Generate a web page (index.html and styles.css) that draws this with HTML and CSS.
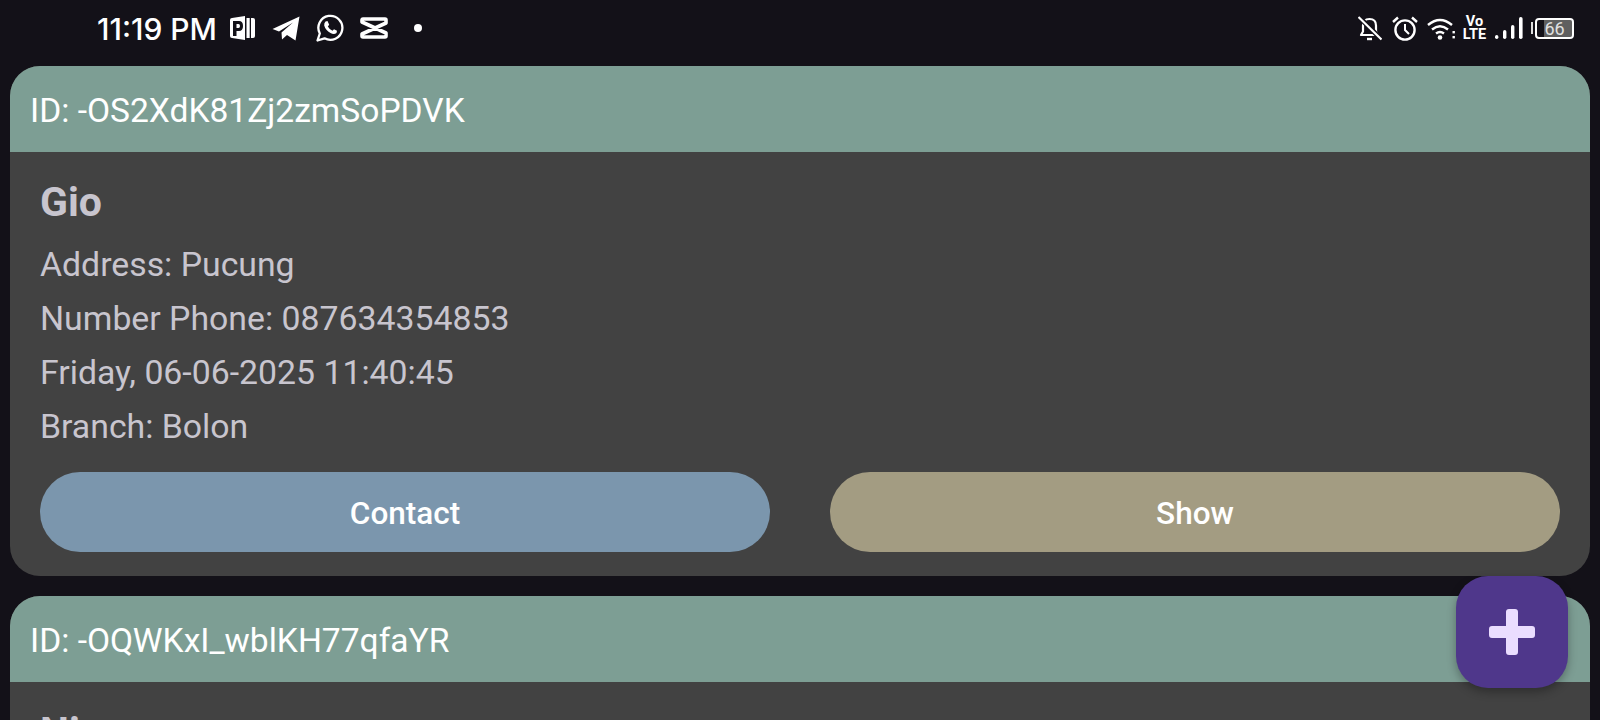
FILE: index.html
```html
<!DOCTYPE html>
<html lang="en">
<head>
    <meta charset="UTF-8">
    <meta name="viewport" content="width=device-width, initial-scale=1.0">
    <title>Customers</title>
    <link rel="stylesheet" href="styles.css">
</head>
<body>
    <!-- Status bar -->
    <div class="status-bar">
        <div class="status-left">
            <span class="clock">11:19 PM</span>
            <svg class="ic-p" width="25" height="26" viewBox="0 0 25 26">
                <path d="M2 3 L15 1 V25 L2 23 Q0 23 0 21 V5 Q0 3 2 3 Z" fill="#fff"/>
                <path d="M3 6 H9 Q13 6 13 11 Q13 16 9 16 H6.5 V21 H3 Z" fill="#131118"/>
                <path d="M6.5 9 H8.5 Q10 9 10 11 Q10 13 8.5 13 H6.5 Z" fill="#fff"/>
                <rect x="16.5" y="3" width="3.2" height="20" fill="#fff"/>
                <path d="M21 3 H23 Q25 3 25 5 V21 Q25 23 23 23 H21 Z" fill="#fff"/>
            </svg>
            <svg class="ic-tg" width="28" height="25" viewBox="0 0 28 25">
                <path d="M0.5 13 L27.5 0.5 L23.5 24.5 L15 19 L10 23.5 L9.5 16.5 L21 6.5 L7 15.5 Z" fill="#fff"/>
            </svg>
            <svg class="ic-wa" width="28" height="28" viewBox="0 0 28 28">
                <path d="M1.5 26.5 L3.8 19.5 A12 12 0 1 1 8.5 24.3 Z" fill="none" stroke="#fff" stroke-width="2.3" stroke-linejoin="round"/>
                <path d="M9.5 7.5 L11.5 7 L13.2 10.8 L11.8 12.5 Q13.5 15.5 16.5 16.8 L18 15.2 L21 16.8 L20.5 19 Q18 21 14.5 19 Q9.5 16.2 8.2 11.5 Q8 9 9.5 7.5 Z" fill="#fff"/>
            </svg>
            <svg class="ic-cc" width="28" height="22" viewBox="0 0 28 22">
                <path d="M3 2 H25 Q26 2 26 3 V6 L2 17 V19 Q2 20 3 20 H25 Q26 20 26 19 V16 L2 5 V3 Q2 2 3 2 Z" fill="none" stroke="#fff" stroke-width="3.6" stroke-linejoin="round"/>
            </svg>
            <span class="dot"></span>
        </div>
        <div class="status-right">
            <svg width="24" height="25" viewBox="0 0 24 25">
                <path d="M3 19 H20 L18 15.5 V9.5 Q18 3 11.5 3 Q5 3 5 9.5 V15.5 Z" fill="none" stroke="#fff" stroke-width="2.2" stroke-linejoin="round"/>
                <path d="M9 23 H14" stroke="#fff" stroke-width="2.4"/>
                <path d="M1 1 L23 23" stroke="#131118" stroke-width="5"/>
                <path d="M0.5 1 L23.5 23.5" stroke="#fff" stroke-width="2.2"/>
            </svg>
            <svg class="ic-alarm" width="26" height="25" viewBox="0 0 26 25">
                <circle cx="13" cy="14" r="9.6" fill="none" stroke="#fff" stroke-width="2.4"/>
                <path d="M13 8 V14 L17 18" fill="none" stroke="#fff" stroke-width="2"/>
                <path d="M1 6 L6 1.5 M25 6 L20 1.5" stroke="#fff" stroke-width="2.4"/>
            </svg>
            <svg class="ic-wifi" width="28" height="23" viewBox="0 0 28 23">
                <path d="M1 8 Q13 -2 25 8 M5 12.5 Q13 6 21 12.5 M9 16.5 Q13 13.5 17 16.5" fill="none" stroke="#fff" stroke-width="2.4"/>
                <circle cx="13" cy="20.5" r="2.3" fill="#fff"/>
                <rect x="25.5" y="14" width="2.4" height="2.4" fill="#fff"/>
                <rect x="25.5" y="19" width="2.4" height="2.4" fill="#fff"/>
            </svg>
            <div class="volte"><span>Vo</span><span>LTE</span></div>
            <svg class="ic-signal" width="28" height="22" viewBox="0 0 28 22">
                <rect x="0" y="18" width="3.4" height="4" rx="1.7" fill="#fff"/>
                <rect x="8" y="13" width="3.4" height="9" rx="1.7" fill="#fff"/>
                <rect x="16" y="8" width="3.4" height="14" rx="1.7" fill="#fff"/>
                <rect x="24" y="0" width="3.6" height="22" rx="1.7" fill="#fff"/>
            </svg>
            <div class="battery">
                <span class="battery-cap"></span>
                <div class="battery-body"><span class="battery-level">66</span></div>
            </div>
        </div>
    </div>

    <!-- Customer cards -->
    <div class="card">
        <div class="card-header">ID: -OS2XdK81Zj2zmSoPDVK</div>
        <div class="card-body">
            <h2 class="name">Gio</h2>
            <p class="line">Address: Pucung</p>
            <p class="line">Number Phone: 087634354853</p>
            <p class="line">Friday, 06-06-2025 11:40:45</p>
            <p class="line">Branch: Bolon</p>
            <div class="actions">
                <button class="btn btn-contact">Contact</button>
                <button class="btn btn-show">Show</button>
            </div>
        </div>
    </div>

    <div class="card">
        <div class="card-header">ID: -OQWKxI_wblKH77qfaYR</div>
        <div class="card-body">
            <h2 class="name">Nia</h2>
        </div>
    </div>

    <button class="fab" aria-label="Add">
        <svg width="46" height="46" viewBox="0 0 46 46">
            <path d="M17 3 Q17 0 20 0 H26 Q29 0 29 3 V17 H43 Q46 17 46 20 V26 Q46 29 43 29 H29 V43 Q29 46 26 46 H20 Q17 46 17 43 V29 H3 Q0 29 0 26 V20 Q0 17 3 17 H17 Z" fill="#eaddff"/>
        </svg>
    </button>
</body>
</html>
```

FILE: styles.css
```css
/* General page styles */
html, body {
    height: 720px;
    overflow: hidden;
}

body {
    font-family: Roboto, "Noto Sans", sans-serif;
    background-color: #131118;
    margin: 0;
    padding: 0 10px;
    position: relative;
}

/* Status bar */
.status-bar {
    height: 66px;
    display: flex;
    justify-content: space-between;
    align-items: center;
    padding: 0 16px 10px 87px;
    box-sizing: border-box;
    color: #fff;
}

.status-left, .status-right {
    display: flex;
    align-items: center;
}

.clock {
    font-size: 30px;
    font-weight: 500;
    font-family: Inter, Roboto, sans-serif;
    margin: 2px 13px 0 0;
}

.ic-tg {
    margin-left: 17px;
}

.ic-wa {
    margin-left: 16px;
}

.ic-cc {
    margin-left: 16px;
}

.dot {
    width: 8px;
    height: 8px;
    border-radius: 50%;
    background-color: #fff;
    margin-left: 26px;
}

.ic-alarm {
    margin-left: 10px;
}

.ic-wifi {
    margin-left: 9px;
}

.volte {
    display: flex;
    flex-direction: column;
    align-items: center;
    width: 25px;
    margin-left: 7px;
    font-size: 14.5px;
    font-weight: 700;
    line-height: 13px;
}

.ic-signal {
    margin-left: 8px;
}

.battery {
    display: flex;
    align-items: center;
    margin-left: 8px;
}

.battery-cap {
    width: 2px;
    height: 12px;
    background-color: #ddd;
    margin-right: 2px;
}

.battery-body {
    width: 39px;
    height: 21px;
    box-sizing: border-box;
    border: 2px solid #fff;
    border-radius: 4px;
    background: linear-gradient(to right, transparent 7px, #5f5f5f 7px);
    background-clip: padding-box;
    font-size: 18px;
    line-height: 17px;
    text-align: center;
    color: #e0e0e0;
}

/* Cards */
.card {
    margin-bottom: 20px;
    border-radius: 30px;
    overflow: hidden;
    background-color: #424242;
}

.card-header {
    height: 84px;
    line-height: 86px;
    padding: 2px 20px 0;
    background-color: #7d9e94;
    color: #fff;
    font-size: 33.6px;
}

.card-body {
    padding: 23px 30px 24px;
    color: #c8c5ce;
}

.name {
    margin: 0 0 9px;
    font-size: 41px;
    font-weight: 700;
    line-height: 54px;
}

.line {
    margin: 0;
    font-size: 33.8px;
    line-height: 54px;
}

.actions {
    display: flex;
    gap: 60px;
    margin-top: 18px;
}

.btn {
    flex: 1;
    height: 80px;
    padding: 2px 0 0;
    border: none;
    border-radius: 40px;
    color: #fff;
    font-family: Roboto, sans-serif;
    font-size: 31.5px;
    font-weight: 500;
    cursor: pointer;
}

.btn-contact {
    background-color: #7b96ad;
}

.btn-show {
    background-color: #a39c82;
}

/* Floating add button */
.fab {
    position: absolute;
    left: 1456px;
    top: 576px;
    width: 112px;
    height: 112px;
    display: flex;
    align-items: center;
    justify-content: center;
    padding: 0;
    border: none;
    border-radius: 32px;
    background-color: #4f378b;
    box-shadow: 0 4px 10px rgba(0, 0, 0, 0.3);
}
```
